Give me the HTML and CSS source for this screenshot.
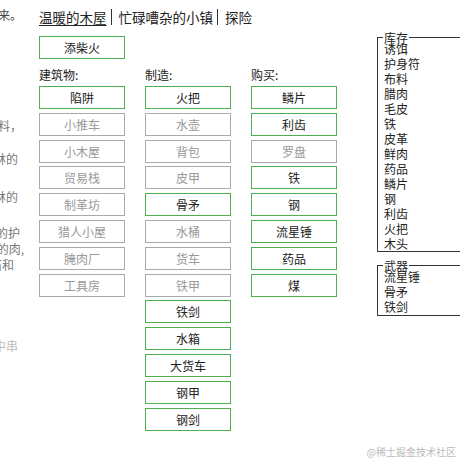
FILE: index.html
```html
<!DOCTYPE html>
<html lang="zh-CN">
<head>
<meta charset="utf-8">
<title>温暖的木屋</title>
<link rel="stylesheet" href="styles.css">
</head>
<body>
<div class="page">
  <div class="notes">
    <div class="note n1"><div class="ln pr2"><span>火焰噼啪作响，一个衣衫褴褛的陌生人走了进来。</span></div></div>
    <div class="note n2"><div class="ln pr2"><span>陌生人说她可以帮忙，她会做些皮革、布料，</span></div></div>
    <div class="note n3"><div class="ln pr6"><span>镇上来了一个猎人，他带来了森林的</span></div></div>
    <div class="note n4"><div class="ln pr6"><span>一位游商带来了远方森林的</span></div></div>
    <div class="note n5">
      <div class="ln pr4"><span>他带着一个破旧的护</span></div>
      <div class="ln"><span>还有一些腌好的肉,</span></div>
      <div class="ln pr10"><span>一些碎石和</span></div>
    </div>
    <div class="note n6"><div class="ln pr6"><span>风声在林中串</span></div></div>
  </div>

  <div class="main">
    <div class="tabs">
      <span class="tab active">温暖的木屋</span>
      <span class="tab">忙碌嘈杂的小镇</span>
      <span class="tab">探险</span>
    </div>
    <div class="fire-row"><div class="btn">添柴火</div></div>
    <div class="cols">
      <div class="col">
        <div class="col-title">建筑物:</div>
        <div class="btn">陷阱</div>
        <div class="btn off">小推车</div>
        <div class="btn off">小木屋</div>
        <div class="btn off">贸易栈</div>
        <div class="btn off">制革坊</div>
        <div class="btn off">猎人小屋</div>
        <div class="btn off">腌肉厂</div>
        <div class="btn off">工具房</div>
      </div>
      <div class="col">
        <div class="col-title">制造:</div>
        <div class="btn">火把</div>
        <div class="btn off">水壶</div>
        <div class="btn off">背包</div>
        <div class="btn off">皮甲</div>
        <div class="btn">骨矛</div>
        <div class="btn off">水桶</div>
        <div class="btn off">货车</div>
        <div class="btn off">铁甲</div>
        <div class="btn">铁剑</div>
        <div class="btn">水箱</div>
        <div class="btn">大货车</div>
        <div class="btn">钢甲</div>
        <div class="btn">钢剑</div>
      </div>
      <div class="col">
        <div class="col-title">购买:</div>
        <div class="btn">鳞片</div>
        <div class="btn">利齿</div>
        <div class="btn off">罗盘</div>
        <div class="btn">铁</div>
        <div class="btn">钢</div>
        <div class="btn">流星锤</div>
        <div class="btn">药品</div>
        <div class="btn">煤</div>
      </div>
    </div>
  </div>

  <div class="stores">
    <div class="box">
      <span class="box-title">库存</span>
      <div class="item">诱饵</div>
      <div class="item">护身符</div>
      <div class="item">布料</div>
      <div class="item">腊肉</div>
      <div class="item">毛皮</div>
      <div class="item">铁</div>
      <div class="item">皮革</div>
      <div class="item">鲜肉</div>
      <div class="item">药品</div>
      <div class="item">鳞片</div>
      <div class="item">钢</div>
      <div class="item">利齿</div>
      <div class="item">火把</div>
      <div class="item">木头</div>
    </div>
    <div class="box weapons">
      <span class="box-title">武器</span>
      <div class="item">流星锤</div>
      <div class="item">骨矛</div>
      <div class="item">铁剑</div>
    </div>
  </div>
</div>
<div class="watermark">@稀土掘金技术社区</div>
</body>
</html>
```
FILE: styles.css
```css
html, body {
  margin: 0;
  padding: 0;
}
body {
  width: 460px;
  height: 460px;
  overflow: hidden;
  position: relative;
  background: #fff;
  color: #222;
  font-family: "Noto Sans CJK SC", "Microsoft YaHei", sans-serif;
  font-size: 12px;
}
.page {
  display: flex;
  align-items: flex-start;
}

/* notifications, clipped at the left edge */
.notes {
  flex: none;
  width: 24px;
  overflow: hidden;
  padding-top: 7px;
  color: #777;
}
.ln {
  display: flex;
  justify-content: flex-end;
  white-space: nowrap;
  line-height: 16px;
}
.ln span { flex: none; }
.pr2 { padding-right: 2px; }
.pr4 { padding-right: 4px; }
.pr6 { padding-right: 6px; }
.pr10 { padding-right: 10px; }
.n1 { color: #444; }
.n2 { margin-top: 95px; }
.n3 { margin-top: 17px; }
.n4 { margin-top: 22px; }
.n5 { margin-top: 20px; }
.n6 { margin-top: 65px; color: #bbb; }

/* main area */
.main {
  flex: none;
  width: 298px;
  margin-left: 15px;
}
.tabs {
  display: flex;
  padding-top: 9px;
  font-size: 13.5px;
  line-height: 16px;
  color: #222;
}
.tab + .tab {
  border-left: 1px solid #333;
  margin-left: 4px;
  padding-left: 7px;
}
.tab.active {
  text-decoration: underline;
  text-underline-offset: 2px;
}
.fire-row {
  margin-top: 11px;
}
.btn {
  box-sizing: border-box;
  width: 86px;
  height: 23px;
  line-height: 21px;
  border: 1px solid #4caf50;
  text-align: center;
  color: #222;
  font-size: 12px;
}
.btn.off {
  border-color: #aaa;
  color: #999;
}
.cols {
  display: flex;
  gap: 20px;
  margin-top: 8px;
}
.col {
  display: flex;
  flex-direction: column;
  gap: 3.8px;
}
.col-title {
  line-height: 16px;
  margin-bottom: -0.8px;
  color: #222;
}

/* stores */
.stores {
  flex: none;
  width: 130px;
  margin-left: 40px;
  margin-top: 37px;
}
.box {
  position: relative;
  border: 1px solid #333;
  padding: 3px 0 0 6px;
}
.box.weapons {
  margin-top: 13px;
  padding-bottom: 1px;
}
.box-title {
  position: absolute;
  top: -4px;
  left: 5px;
  padding: 0 1px;
  background: #fff;
  line-height: 8px;
}
.item {
  line-height: 15px;
}

.watermark {
  position: absolute;
  right: 4px;
  bottom: 2px;
  font-size: 10px;
  line-height: 12px;
  color: #bbb;
}
```
